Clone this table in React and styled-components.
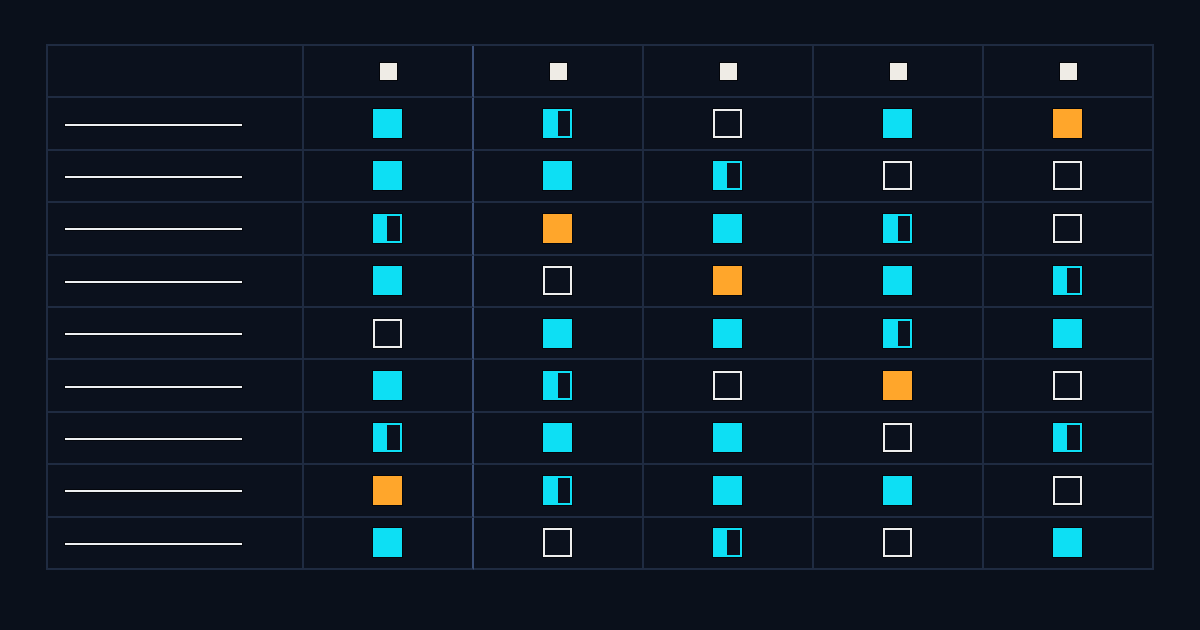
import React from 'react'
import styled, { createGlobalStyle } from 'styled-components'

const GlobalStyle = createGlobalStyle`
  html, body {
    margin: 0;
    padding: 0;
    background: #0a101b;
    font-family: "Inter", "Liberation Sans", sans-serif;
  }
`

const Page = styled.div`
  width: 1200px;
  height: 630px;
  box-sizing: border-box;
  padding: 44px 0 0 46px;
  background: #0a101b;
`

const Table = styled.div`
  display: grid;
  grid-template-columns: 256px repeat(5, 170px);
  grid-template-rows: repeat(10, 52.4px);
  width: 1108px;
  box-sizing: border-box;
  border-top: 2px solid #1f2b41;
  border-left: 2px solid #1f2b41;
  background: #0b111d;
`

const Cell = styled.div`
  display: flex;
  align-items: center;
  justify-content: ${p => (p.$label ? 'flex-start' : 'center')};
  padding-left: ${p => (p.$label ? '17px' : '0')};
  border-right: 2px solid ${p => (p.$accent ? '#3a4e75' : '#1f2b41')};
  border-bottom: 2px solid #1f2b41;
`

const LabelLine = styled.div`
  width: 177px;
  height: 2px;
  margin-top: 2px;
  background: #eef0f2;
  box-shadow: 0 0 0 1px rgba(0, 0, 0, 0.5);
`

const HeadMark = styled.div`
  width: 17px;
  height: 17px;
  background: #efece6;
  box-shadow: 0 0 0 1px rgba(0, 0, 0, 0.6);
`

const CYAN = '#0ddff4'
const ORANGE = '#ffa62b'

const Mark = styled.div`
  width: 29px;
  height: 29px;
  margin-left: -1px;
  box-sizing: border-box;
  box-shadow: 0 0 0 1px rgba(0, 0, 0, 0.55);
  ${p => p.$kind === 'full' && `background: ${CYAN};`}
  ${p => p.$kind === 'orange' && `background: ${ORANGE};`}
  ${p => p.$kind === 'empty' && `border: 2px solid #eeeeee;`}
  ${p =>
    p.$kind === 'half' &&
    `border: 2px solid ${CYAN};
     background: linear-gradient(to right, ${CYAN} 50%, transparent 50%);`}
`

const F = 'full'
const H = 'half'
const E = 'empty'
const O = 'orange'

const rows = [
  [F, H, E, F, O],
  [F, F, H, E, E],
  [H, O, F, H, E],
  [F, E, O, F, H],
  [E, F, F, H, F],
  [F, H, E, O, E],
  [H, F, F, E, H],
  [O, H, F, F, E],
  [F, E, H, E, F],
]

export default function App() {
  return (
    <Page>
      <GlobalStyle />
      <Table>
        <Cell $label />
        {[0, 1, 2, 3, 4].map(i => (
          <Cell key={i} $accent={i === 0}>
            <HeadMark />
          </Cell>
        ))}
        {rows.map((row, r) => (
          <React.Fragment key={r}>
            <Cell $label>
              <LabelLine />
            </Cell>
            {row.map((kind, c) => (
              <Cell key={c} $accent={c === 0}>
                <Mark $kind={kind} />
              </Cell>
            ))}
          </React.Fragment>
        ))}
      </Table>
    </Page>
  )
}
